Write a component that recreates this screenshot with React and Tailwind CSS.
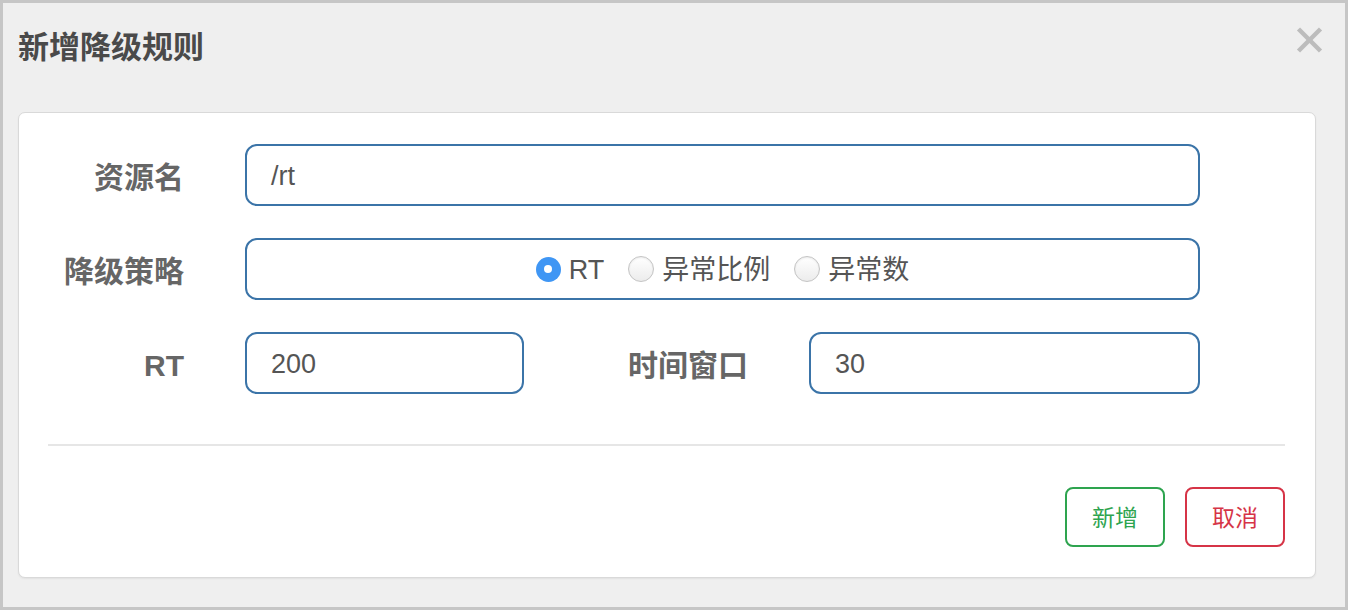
import React from "react";

const font = { fontFamily: '"Liberation Sans", "Noto Sans CJK SC", sans-serif' };

function Radio({ checked, label }) {
  return (
    <label className="flex items-center gap-[8px]">
      {checked ? (
        <span className="flex h-[25px] w-[25px] items-center justify-center rounded-full bg-[#3f96f4]">
          <span className="h-[8px] w-[8px] rounded-full bg-white" />
        </span>
      ) : (
        <span className="h-[26px] w-[26px] rounded-full border border-[#c4c4c4] bg-gradient-to-b from-[#ffffff] to-[#ececec] shadow-[inset_0_1px_2px_rgba(0,0,0,0.08)]" />
      )}
      <span className="pt-[2px] text-[27px] leading-none text-[#555]">{label}</span>
    </label>
  );
}

function Input({ value, className = "" }) {
  return (
    <div
      className={
        "flex h-[62px] items-center rounded-[12px] border-2 border-[#3b74a8] bg-white pl-[24px] pt-[2px] text-[27px] text-[#555] " +
        className
      }
    >
      {value}
    </div>
  );
}

function Label({ children, className = "" }) {
  return (
    <div className={"pt-[6px] text-right text-[30px] font-bold leading-none text-[#666] " + className}>
      {children}
    </div>
  );
}

export default function App() {
  return (
    <div
      className="box-border h-[610px] w-[1348px] border-[3px] border-[#c6c6c6] bg-[#efefef]"
      style={font}
    >
      <div className="flex h-[88px] items-center justify-between pl-[15px] pr-[22px]">
        <h1 className="text-[31px] font-bold leading-none text-[#4a4a4a]">新增降级规则</h1>
        <svg width="27" height="26" viewBox="0 0 27 26" className="mt-[-14px]">
          <line x1="2.5" y1="2" x2="24.5" y2="24" stroke="#bcbcbc" strokeWidth="4.5" />
          <line x1="24.5" y1="2" x2="2.5" y2="24" stroke="#bcbcbc" strokeWidth="4.5" />
        </svg>
      </div>

      <div className="ml-[15px] mt-[21px] box-border h-[466px] w-[1298px] rounded-[7px] border border-[#d9d9d9] bg-white pt-[31px] shadow-[0_1px_2px_rgba(0,0,0,0.06)]">
        <div className="flex flex-col gap-[32px] pr-[115px]">
          <div className="flex items-center">
            <Label className="w-[165px]">资源名</Label>
            <Input value="/rt" className="ml-[61px] flex-1" />
          </div>
          <div className="flex items-center">
            <Label className="w-[165px]">降级策略</Label>
            <div className="ml-[61px] flex h-[62px] flex-1 items-center justify-center gap-[24px] rounded-[12px] border-2 border-[#3b74a8] bg-white">
              <Radio checked label="RT" />
              <Radio label="异常比例" />
              <Radio label="异常数" />
            </div>
          </div>
          <div className="flex items-center">
            <Label className="w-[165px]">RT</Label>
            <Input value="200" className="ml-[61px] w-[279px]" />
            <Label className="w-[224px]">时间窗口</Label>
            <Input value="30" className="ml-[61px] flex-1" />
          </div>
        </div>

        <div className="ml-[29px] mr-[30px] mt-[50px] h-[2px] bg-[#e6e6e6]" />

        <div className="mr-[30px] mt-[41px] flex justify-end gap-[20px]">
          <button className="h-[60px] w-[100px] rounded-[8px] border-2 border-[#2ea44f] bg-white pt-[2px] text-[23px] text-[#2ea44f]">
            新增
          </button>
          <button className="h-[60px] w-[100px] rounded-[8px] border-2 border-[#d63447] bg-white pt-[2px] text-[23px] text-[#d63447]">
            取消
          </button>
        </div>
      </div>
    </div>
  );
}
